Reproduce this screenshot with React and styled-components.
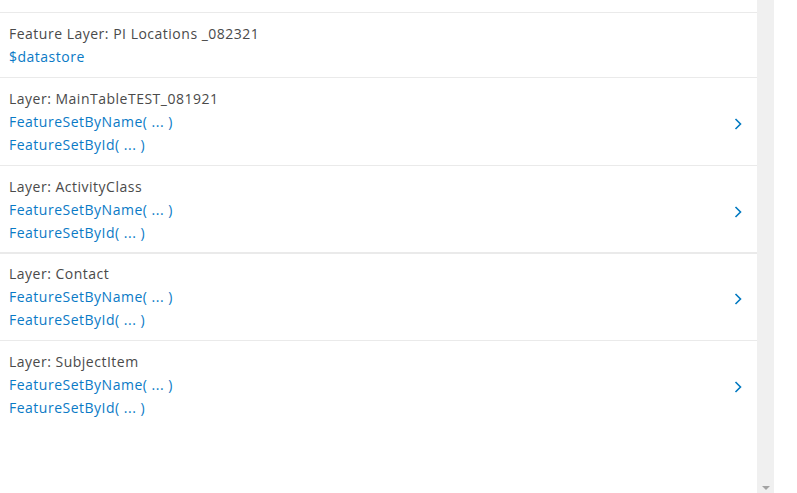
import React from "react";
import styled, { createGlobalStyle } from "styled-components";

const Global = createGlobalStyle`
  html, body { margin: 0; padding: 0; background: #ffffff; }
  body { font-family: "Open Sans", "Noto Sans", sans-serif; }
`;

const Page = styled.div`
  display: flex;
  height: 493px;
  width: 797px;
  overflow: hidden;
`;

const Panel = styled.div`
  width: 757px;
  padding-top: 12px;
  box-sizing: border-box;
`;

const Row = styled.div`
  display: flex;
  align-items: center;
  border-top: 1px solid #eaeaea;
  border-bottom: ${(p) => (p.$divider ? "1px solid #eaeaea" : "none")};
  padding: ${(p) => (p.$lift ? 8 : 9)}px 15px ${(p) => (p.$tight ? 8 : 9)}px 9px;
`;

const Body = styled.div`
  flex: 1;
  display: flex;
  flex-direction: column;
`;

const Title = styled.div`
  font-size: 14px;
  line-height: 23px;
  letter-spacing: 0.5px;
  color: #4a4a4a;
`;

const Snippet = styled.div`
  font-size: 14px;
  line-height: 23px;
  letter-spacing: 0.5px;
  color: #0a7ac6;
`;

const Chevron = styled.svg`
  width: 8px;
  height: 12px;
  margin-top: 4px;
  flex: none;
`;

const Scrollbar = styled.div`
  width: 17px;
  height: 100%;
  background: #f0f0f0;
  display: flex;
  flex-direction: column;
  justify-content: flex-end;
  align-items: center;
`;

const ArrowDown = styled.div`
  width: 0;
  height: 0;
  border-left: 4px solid transparent;
  border-right: 4px solid transparent;
  border-top: 4px solid #a3a3a3;
  margin-bottom: 3px;
`;

const rows = [
  { title: "Feature Layer: PI Locations _082321", snippets: ["$datastore"], nav: false },
  { title: "Layer: MainTableTEST_081921", snippets: ["FeatureSetByName( ... )", "FeatureSetById( ... )"], nav: true },
  { title: "Layer: ActivityClass", snippets: ["FeatureSetByName( ... )", "FeatureSetById( ... )"], nav: true, divider: true, tight: true },
  { title: "Layer: Contact", snippets: ["FeatureSetByName( ... )", "FeatureSetById( ... )"], nav: true, lift: true },
  { title: "Layer: SubjectItem", snippets: ["FeatureSetByName( ... )", "FeatureSetById( ... )"], nav: true },
];

export default function App() {
  return (
    <>
      <Global />
      <Page>
        <Panel>
          {rows.map((r) => (
            <Row key={r.title} $divider={r.divider} $tight={r.tight} $lift={r.lift}>
              <Body>
                <Title>{r.title}</Title>
                {r.snippets.map((s) => (
                  <Snippet key={s}>{s}</Snippet>
                ))}
              </Body>
              {r.nav && (
                <Chevron viewBox="0 0 8 12">
                  <path d="M1.5 1 L6.5 6 L1.5 11" fill="none" stroke="#0079c1" strokeWidth="1.6" />
                </Chevron>
              )}
            </Row>
          ))}
        </Panel>
        <Scrollbar>
          <ArrowDown />
        </Scrollbar>
      </Page>
    </>
  );
}
